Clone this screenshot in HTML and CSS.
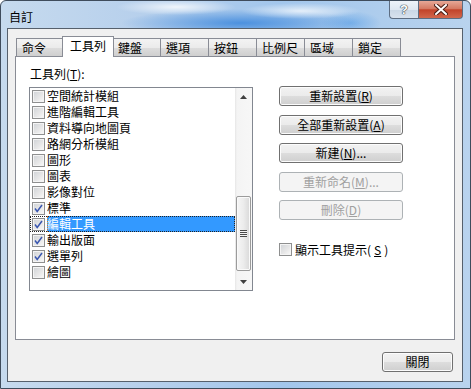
FILE: index.html
```html
<!DOCTYPE html>
<html lang="zh-Hant">
<head>
    <meta charset="utf-8" />
    <title>自訂</title>
    <link rel="stylesheet" href="styles.css">
</head>
<body>
    <div class="window">
        <!-- title bar -->
        <div class="titlebar">
            <span class="title">自訂</span>
            <div class="caption">
                <span class="cap help">?</span>
                <span class="cap close">
                    <svg width="14" height="11" viewBox="0 0 14 11">
                        <path d="M2 1 L12 10 M12 1 L2 10" stroke="#4b1d14" stroke-width="4" stroke-linecap="square" />
                        <path d="M2 1 L12 10 M12 1 L2 10" stroke="#fff" stroke-width="2" stroke-linecap="square" />
                    </svg>
                </span>
            </div>
        </div>

        <div class="client">
            <div class="tabs">
                <div class="tab">命令</div>
                <div class="tab active">工具列</div>
                <div class="tab">鍵盤</div>
                <div class="tab">選項</div>
                <div class="tab">按鈕</div>
                <div class="tab">比例尺</div>
                <div class="tab">區域</div>
                <div class="tab">鎖定</div>
            </div>

            <div class="panel">
                <div class="left-col">
                    <div class="list-label">工具列(<u>T</u>):</div>
                    <div class="listbox">
                        <ul class="rows">
                            <li class="row"><span class="cb"></span><span class="txt">空間統計模組</span></li>
                            <li class="row"><span class="cb"></span><span class="txt">進階編輯工具</span></li>
                            <li class="row"><span class="cb"></span><span class="txt">資料導向地圖頁</span></li>
                            <li class="row"><span class="cb"></span><span class="txt">路網分析模組</span></li>
                            <li class="row"><span class="cb"></span><span class="txt">圖形</span></li>
                            <li class="row"><span class="cb"></span><span class="txt">圖表</span></li>
                            <li class="row"><span class="cb"></span><span class="txt">影像對位</span></li>
                            <li class="row"><span class="cb checked"><svg width="11" height="11" viewBox="0 0 11 11"><path d="M2 5.5 L4.2 8.5 L9 2" fill="none" stroke="#3a57b0" stroke-width="1.5" /></svg></span><span class="txt">標準</span></li>
                            <li class="row selected"><span class="cb checked"><svg width="11" height="11" viewBox="0 0 11 11"><path d="M2 5.5 L4.2 8.5 L9 2" fill="none" stroke="#3a57b0" stroke-width="1.5" /></svg></span><span class="txt">編輯工具</span></li>
                            <li class="row"><span class="cb checked"><svg width="11" height="11" viewBox="0 0 11 11"><path d="M2 5.5 L4.2 8.5 L9 2" fill="none" stroke="#3a57b0" stroke-width="1.5" /></svg></span><span class="txt">輸出版面</span></li>
                            <li class="row"><span class="cb checked"><svg width="11" height="11" viewBox="0 0 11 11"><path d="M2 5.5 L4.2 8.5 L9 2" fill="none" stroke="#3a57b0" stroke-width="1.5" /></svg></span><span class="txt">選單列</span></li>
                            <li class="row"><span class="cb"></span><span class="txt">繪圖</span></li>
                        </ul>
                        <div class="scrollbar">
                            <div class="arrow">
                                <svg width="7" height="4" viewBox="0 0 7 4"><path d="M0 4 L3.5 0 L7 4 Z" fill="#404040" /></svg>
                            </div>
                            <div class="track">
                                <div class="thumb">
                                    <span class="grip"></span>
                                </div>
                            </div>
                            <div class="arrow">
                                <svg width="7" height="4" viewBox="0 0 7 4"><path d="M0 0 L7 0 L3.5 4 Z" fill="#404040" /></svg>
                            </div>
                        </div>
                    </div>
                </div>

                <div class="right-col">
                    <button class="btn">重新設置(<u>R</u>)</button>
                    <button class="btn">全部重新設置(<u>A</u>)</button>
                    <button class="btn">新建(<u>N</u>)...</button>
                    <button class="btn" disabled>重新命名(<u>M</u>)...</button>
                    <button class="btn" disabled>刪除(<u>D</u>)</button>
                    <label class="tip-row"><span class="cb"></span>顯示工具提示(<u>S</u>)</label>
                </div>
            </div>

            <div class="footer">
                <button class="btn close-btn">關閉</button>
            </div>
        </div>
    </div>
</body>
</html>
```

FILE: styles.css
```css
/* Global */
html, body {
    margin: 0;
    padding: 0;
    overflow: hidden;
}

body {
    font-family: "Noto Sans CJK TC", "Liberation Sans", sans-serif;
    font-size: 12px;
    color: #000;
}

u {
    text-decoration: underline;
    text-underline-offset: 1px;
}

/* Window frame (Aero glass) */
.window {
    width: 471px;
    height: 389px;
    box-sizing: border-box;
    border: 1px solid #3f4c5c;
    border-radius: 6px 6px 0 0;
    display: flex;
    flex-direction: column;
    background:
        radial-gradient(ellipse 60px 8px at 175px 6px, rgba(255,255,255,0.8), rgba(255,255,255,0)),
        radial-gradient(ellipse 60px 8px at 300px 10px, rgba(255,255,255,0.7), rgba(255,255,255,0)),
        radial-gradient(ellipse 120px 14px at 240px 22px, rgba(60,135,220,0.85), rgba(60,135,220,0)),
        radial-gradient(ellipse 30px 12px at 350px 22px, rgba(90,160,230,0.6), rgba(90,160,230,0)),
        linear-gradient(90deg, #c6daee 0%, #b7d0ec 30%, #a2c6ec 60%, #b9d3ee 100%);
}

.titlebar {
    height: 27px;
    display: flex;
    justify-content: space-between;
    padding: 0 7px 0 8px;
}

.title {
    margin-top: 8px;
    line-height: 15px;
}

.caption {
    display: flex;
    align-items: flex-start;
}

.cap {
    height: 18px;
    box-sizing: border-box;
    border: 1px solid #5d6d82;
    border-top: none;
    display: flex;
    align-items: center;
    justify-content: center;
}

.help {
    width: 29px;
    border-radius: 0 0 0 4px;
    border-right: none;
    background: linear-gradient(180deg, #eef3f9 0%, #dfe7f1 50%, #c9d6e5 51%, #d8e2ee 100%);
    color: #fff;
    font-family: "Liberation Sans", sans-serif;
    font-weight: bold;
    font-size: 13px;
    text-shadow: 0 0 1px #34404e, 0 0 1px #34404e, 0 0 1px #34404e;
}

.close {
    width: 45px;
    border-radius: 0 0 4px 0;
    background: linear-gradient(180deg, #e7a897 0%, #d57a63 45%, #c2432a 52%, #d2674c 100%);
}

/* Client area */
.client {
    flex: 1;
    margin: 0 7px 6px 6px;
    background: #f0f0f0;
    border: 1px solid #56606c;
    padding: 7px 7px 0 7px;
    display: flex;
    flex-direction: column;
}

/* Tabs */
.tabs {
    display: flex;
    height: 20px;
    padding-left: 1px;
    position: relative;
    z-index: 1;
}

.tab {
    width: 49px;
    height: 18px;
    margin-top: 2px;
    margin-right: -1px;
    box-sizing: border-box;
    border: 1px solid #898c95;
    border-bottom: none;
    background: linear-gradient(180deg, #f3f3f3 0%, #ebebeb 50%, #dddddd 51%, #cfcfcf 100%);
    padding-left: 5px;
    line-height: 17px;
}

.tab.active {
    width: 52px;
    height: 21px;
    margin-top: 0;
    margin-left: -2px;
    margin-right: -2px;
    background: #fff;
    padding-left: 7px;
    line-height: 18px;
    position: relative;
}

/* Tab page */
.panel {
    height: 284px;
    box-sizing: border-box;
    border: 1px solid #898c95;
    background: #fff;
    display: flex;
    padding: 9px 0 0 13px;
}

.list-label {
    line-height: 16px;
    margin: 0 0 5px 1px;
}

/* List box */
.listbox {
    width: 224px;
    height: 204px;
    box-sizing: border-box;
    border: 1px solid #828790;
    display: flex;
}

.rows {
    list-style: none;
    margin: 0;
    padding: 0;
    flex: 1;
}

.row {
    height: 16px;
    display: flex;
    align-items: center;
    padding-left: 2px;
    box-sizing: border-box;
}

.row .txt {
    flex: 1;
    margin-left: 2px;
    line-height: 16px;
    white-space: nowrap;
}

.row.selected {
    outline: 1px dotted #222;
    outline-offset: -1px;
}

.row.selected .txt {
    background: #3399ff;
    color: #fff;
    outline: 1px dotted #c87a3c;
    outline-offset: -1px;
}

/* Check box */
.cb {
    width: 13px;
    height: 13px;
    flex: none;
    box-sizing: border-box;
    border: 1px solid #8e8f8f;
    box-shadow: inset 0 0 0 1px #f4f4f4;
    background: linear-gradient(135deg, #cfd2d6 0%, #e8e8e8 60%, #fbfbfb 100%);
    display: flex;
    align-items: center;
    justify-content: center;
}

/* Scroll bar */
.scrollbar {
    width: 17px;
    display: flex;
    flex-direction: column;
    background: linear-gradient(90deg, #e6e6e6 0px, #f4f4f4 2px, #f7f7f7 100%);
}

.arrow {
    height: 17px;
    display: flex;
    align-items: center;
    justify-content: center;
}

.track {
    flex: 1;
}

.thumb {
    margin: 91px 1px 0 1px;
    height: 75px;
    box-sizing: border-box;
    border: 1px solid #9b9b9b;
    border-radius: 2px;
    background: linear-gradient(90deg, #f6f6f6 0%, #ececec 50%, #d8d8d8 100%);
    box-shadow: inset 0 0 0 1px #fafafa;
    display: flex;
    align-items: center;
    justify-content: center;
}

.grip {
    width: 7px;
    height: 7px;
    background: repeating-linear-gradient(180deg, #4a4a4a 0px, #4a4a4a 1px, #f4f4f4 1px, #f4f4f4 2px);
}

/* Right side buttons */
.right-col {
    margin-left: 26px;
    padding-top: 20px;
    display: flex;
    flex-direction: column;
    align-items: flex-start;
    gap: 8.5px;
}

.btn {
    width: 124px;
    height: 20px;
    box-sizing: border-box;
    border: 1px solid #707070;
    border-radius: 3px;
    background: linear-gradient(180deg, #f2f2f2 0%, #ebebeb 50%, #dddddd 51%, #cfcfcf 100%);
    box-shadow: inset 0 0 0 1px #fcfcfc;
    font-family: inherit;
    font-size: 12px;
    color: #000;
    padding: 0;
    line-height: 16px;
}

.btn:disabled {
    border-color: #adb2b5;
    background: #f4f4f4;
    color: #a0a0a0;
    box-shadow: none;
}

.tip-row {
    margin-top: 13px;
    display: flex;
    align-items: center;
    gap: 3px;
    line-height: 16px;
}

/* Footer */
.footer {
    display: flex;
    justify-content: flex-end;
    padding: 12px 2px 0 0;
}

.close-btn {
    width: 71px;
}
```
